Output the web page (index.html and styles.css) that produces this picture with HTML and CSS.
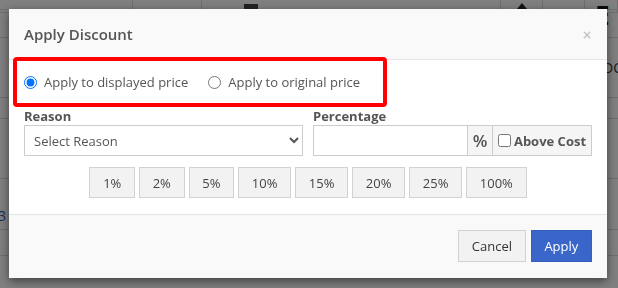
FILE: index.html
```html
<!DOCTYPE html>
<html lang="en">

<head>
    <meta charset="UTF-8">
    <title>Apply Discount</title>
    <link rel="stylesheet" href="styles.css">
</head>

<body>
    <div class="page">
        <div class="topbar">
            <span class="tb tb-left"></span>
            <span class="tb tb-mid"></span>
            <span class="tb-icon"></span>
            <span class="tb-spacer"></span>
            <span class="tb tb-sm"><span class="tb-arrow"></span></span>
            <span class="tb tb-sm"></span>
            <span class="tb tb-end">E</span>
        </div>
        <div class="bg-row row-a"></div>
        <div class="bg-row row-b"><span class="bg-right">DOC</span></div>
        <div class="bg-row row-c"></div>
        <div class="bg-row row-d"></div>
        <div class="bg-row row-e"><span class="bg-num">3</span></div>
        <div class="bg-row row-f"></div>
    </div>

    <div class="backdrop"></div>

    <div class="modal">
        <div class="modal-header">
            <h4 class="modal-title">Apply Discount</h4>
            <button class="close" type="button">×</button>
        </div>
        <div class="modal-body">
            <div class="radio-row">
                <label class="radio"><input type="radio" name="applyTo" checked> Apply to displayed price</label>
                <label class="radio"><input type="radio" name="applyTo"> Apply to original price</label>
            </div>
            <div class="form-row">
                <div class="form-col">
                    <label class="lbl" for="reason">Reason</label>
                    <select id="reason" class="ctrl">
                        <option>Select Reason</option>
                    </select>
                </div>
                <div class="form-col">
                    <label class="lbl" for="pct">Percentage</label>
                    <div class="input-group">
                        <input type="text" id="pct" class="ctrl">
                        <span class="addon addon-pct">%</span>
                        <label class="addon addon-cost"><input type="checkbox"> Above Cost</label>
                    </div>
                </div>
            </div>
            <div class="quick">
                <button class="qbtn" type="button">1%</button>
                <button class="qbtn" type="button">2%</button>
                <button class="qbtn" type="button">5%</button>
                <button class="qbtn" type="button">10%</button>
                <button class="qbtn" type="button">15%</button>
                <button class="qbtn" type="button">20%</button>
                <button class="qbtn" type="button">25%</button>
                <button class="qbtn" type="button">100%</button>
            </div>
        </div>
        <div class="modal-footer">
            <button class="btn btn-default" type="button">Cancel</button>
            <button class="btn btn-primary" type="button">Apply</button>
        </div>
        <div class="highlight"></div>
    </div>
</body>

</html>
```

FILE: styles.css
```css
body {
    margin: 0;
    font-family: 'Open Sans', 'Liberation Sans', sans-serif;
    font-size: 13px;
    color: #555;
    background: #fff;
    overflow: hidden;
}

/* page behind the dialog */
.page {
    width: 618px;
    height: 288px;
}

.topbar {
    display: flex;
    height: 9px;
    border-bottom: 1px solid #ddd;
}

.tb {
    height: 12px;
    border: 1px solid #ddd;
    border-top: none;
}

.tb-left {
    width: 132px;
    border-left: none;
}

.tb-mid {
    width: 68px;
    border-left: none;
}

.tb-icon {
    width: 14px;
    height: 6px;
    margin: 4px 0 0 42px;
    background: #444;
}

.tb-spacer {
    flex: 1;
}

.tb-sm {
    width: 41px;
    border-right: none;
    position: relative;
}

.tb-arrow {
    display: block;
    width: 0;
    height: 0;
    margin: 3px auto 0;
    border-left: 5px solid transparent;
    border-right: 5px solid transparent;
    border-bottom: 6px solid #222;
}

.tb-end {
    width: 22px;
    font-size: 26px;
    font-weight: bold;
    line-height: 30px;
    color: #111;
    padding-left: 10px;
}

.bg-row {
    border-bottom: 1px solid #ddd;
    position: relative;
}

.row-a {
    height: 27px;
}

.row-b {
    height: 59px;
}

.row-c {
    height: 20px;
}

.row-d {
    height: 59px;
}

.row-e {
    height: 50px;
}

.row-f {
    height: 25px;
}

.bg-right {
    position: absolute;
    left: 603px;
    top: 20px;
    font-size: 14px;
    color: #333;
}

.bg-num {
    position: absolute;
    left: -2px;
    top: 27px;
    font-size: 14px;
    color: #2a5db0;
}

.backdrop {
    position: fixed;
    inset: 0;
    background: rgba(0, 0, 0, 0.5);
}

/* dialog */
.modal {
    position: fixed;
    left: 9px;
    top: 9px;
    width: 598px;
    background: #fff;
    box-shadow: 0 3px 9px rgba(0, 0, 0, 0.5);
}

.modal-header {
    display: flex;
    align-items: center;
    justify-content: space-between;
    height: 50px;
    padding: 0 15px;
    background: #f9f9f9;
    border-bottom: 1px solid #e5e5e5;
}

.modal-title {
    margin: 0;
    font-size: 15px;
    font-weight: 600;
    color: #555;
}

.close {
    border: none;
    background: none;
    padding: 0;
    margin-top: 2px;
    font-family: 'DejaVu Sans', sans-serif;
    font-size: 12px;
    font-weight: bold;
    color: #c4c4c4;
}

.modal-body {
    padding: 12px 15px 16px;
}

.radio-row {
    display: flex;
    align-items: center;
    gap: 20px;
    height: 20px;
    margin-bottom: 15px;
}

.radio {
    display: flex;
    align-items: center;
    gap: 3px;
    color: #555;
}

.radio input {
    width: 13px;
    height: 13px;
    margin: 0 4px 0 0;
}

.form-row {
    display: flex;
    gap: 10px;
}

.form-col {
    flex: 1;
}

.lbl {
    display: block;
    font-weight: bold;
    line-height: 18px;
    color: #555;
}

.ctrl {
    box-sizing: border-box;
    height: 31px;
    border: 1px solid #ccc;
    border-radius: 0;
    background: #fff;
    font-family: inherit;
    font-size: 13px;
    color: #555;
}

select.ctrl {
    width: 100%;
    padding: 0 5px;
}

.input-group {
    display: flex;
    height: 31px;
}

.input-group .ctrl {
    width: 155px;
    padding: 0 8px;
    outline: none;
}

.addon {
    display: flex;
    align-items: center;
    justify-content: center;
    box-sizing: border-box;
    border: 1px solid #ccc;
    border-left: none;
    background: #f5f5f5;
    color: #555;
}

.addon-pct {
    width: 25px;
    font-size: 17px;
    font-weight: 600;
}

.addon-cost {
    width: 99px;
    gap: 3px;
    font-weight: bold;
}

.addon-cost input {
    width: 13px;
    height: 13px;
    margin: 0;
}

.quick {
    display: flex;
    justify-content: center;
    gap: 4px;
    margin-top: 11px;
}

.qbtn,
.btn {
    height: 31px;
    padding: 0 12.7px;
    border: 1px solid #d2d2d2;
    border-radius: 0;
    background: #f2f2f2;
    font-family: inherit;
    font-size: 13px;
    color: #444;
}

.modal-footer {
    display: flex;
    justify-content: flex-end;
    gap: 5px;
    padding: 15px 15px 16px;
    background: #f9f9f9;
    border-top: 1px solid #e5e5e5;
}

.btn {
    height: 32px;
}

.btn-default {
    color: #333;
}

.btn-primary {
    background: #3a66c9;
    border-color: #3560c0;
    color: #fff;
}

/* red annotation frame */
.highlight {
    position: absolute;
    left: 4px;
    top: 48px;
    width: 374px;
    height: 50px;
    box-sizing: border-box;
    border: 4px solid #f00;
    border-radius: 4px;
}
```
